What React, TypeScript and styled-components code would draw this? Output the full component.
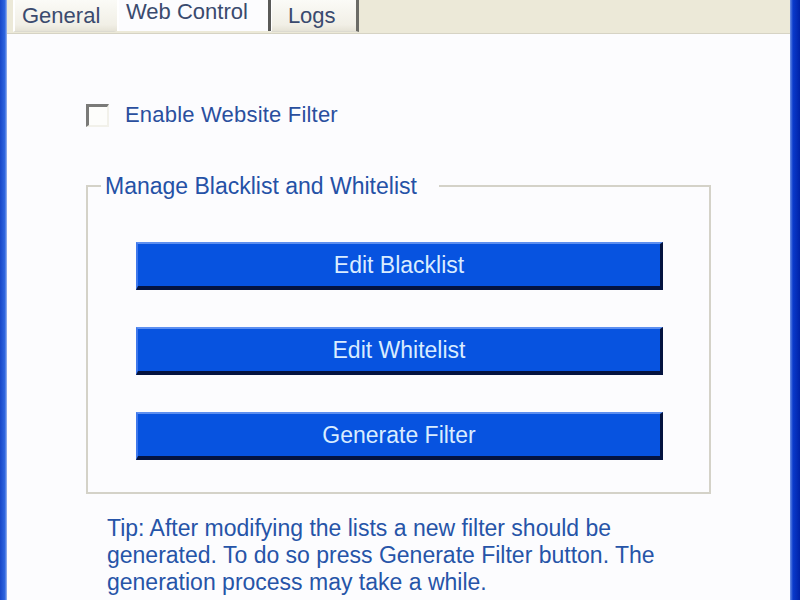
import styled, { createGlobalStyle } from "styled-components";

const TABS = [
  { title: "General", active: false },
  { title: "Web Control", active: true },
  { title: "Logs", active: false },
];

const LIST_BUTTONS = ["Edit Blacklist", "Edit Whitelist", "Generate Filter"];

const GlobalStyle = createGlobalStyle`
  html, body {
    margin: 0;
    padding: 0;
    background: #fcfcfe;
  }
  body {
    font-family: "Liberation Sans", Arial, sans-serif;
  }
`;

export default function App() {
  const tabs = TABS.map((tab, i) => (
    <Tab key={i} $active={tab.active}>
      {tab.title}
    </Tab>
  ));

  const buttons = LIST_BUTTONS.map((label, i) => (
    <ListButton key={i}>{label}</ListButton>
  ));

  return (
    <Window>
      <GlobalStyle />
      <FrameEdge $side="left" />
      <Body>
        <TabStrip>{tabs}</TabStrip>
        <Panel>
          <CheckRow>
            <CheckBox />
            <CheckLabel>Enable Website Filter</CheckLabel>
          </CheckRow>

          <GroupBox>
            <Legend>Manage Blacklist and Whitelist</Legend>
            <ButtonStack>{buttons}</ButtonStack>
          </GroupBox>

          <Tip>
            Tip: After modifying the lists a new filter should be
            <br />
            generated. To do so press Generate Filter button. The
            <br />
            generation process may take a while.
          </Tip>
        </Panel>
      </Body>
      <FrameEdge $side="right" />
    </Window>
  );
}

const Window = styled.div`
  display: flex;
  width: 800px;
  height: 600px;
  overflow: hidden;
  background: #fcfcfe;
`;

const FrameEdge = styled.div<{ $side: "left" | "right" }>`
  flex: none;
  width: ${(p) => (p.$side === "left" ? "7px" : "10px")};
  background: ${(p) =>
    p.$side === "left"
      ? "linear-gradient(to right, #1747c8, #2e66e0 70%, #9fb8ee)"
      : "linear-gradient(to right, #6b8fe6, #0a3acb 30%, #0022a8)"};
`;

const Body = styled.div`
  flex: 1;
  display: flex;
  flex-direction: column;
  min-width: 0;
`;

const TabStrip = styled.div`
  display: flex;
  align-items: flex-start;
  height: 34px;
  padding-left: 6px;
  background: #ece9d8;
  border-bottom: 1px solid #d6d3c4;
  box-sizing: border-box;
`;

const Tab = styled.div<{ $active: boolean }>`
  flex: none;
  box-sizing: border-box;
  height: ${(p) => (p.$active ? "35px" : "32px")};
  margin-top: ${(p) => (p.$active ? "-4px" : "0")};
  padding: ${(p) => (p.$active ? "4px 20px 0 7px" : "4px 20px 0 16px")};
  margin-right: ${(p) => (p.$active ? "-1px" : "0")};
  position: relative;
  z-index: ${(p) => (p.$active ? 1 : 0)};
  background: ${(p) =>
    p.$active ? "#fcfcfe" : "linear-gradient(#fbfbf7, #f1efe6 80%, #e6e3d6)"};
  border-left: 2px solid #ffffff;
  border-right: 3px solid ${(p) => (p.$active ? "#5a5a58" : "#6b6b66")};
  border-bottom: ${(p) => (p.$active ? "none" : "1px solid #dcdad0")};
  color: #3a4a6e;
  font-size: 22px;
  line-height: 24px;
  white-space: nowrap;

  &:first-child {
    border-right-color: transparent;
    width: 104px;
    padding-left: 7px;
  }
`;

const Panel = styled.div`
  flex: 1;
  display: flex;
  flex-direction: column;
  padding: 69px 0 0 79px;
  color: #2451a6;
`;

const CheckRow = styled.div`
  display: flex;
  align-items: center;
  gap: 16px;
  height: 24px;
`;

const CheckBox = styled.div`
  box-sizing: border-box;
  width: 23px;
  height: 23px;
  border-top: 3px solid #7a7a78;
  border-left: 3px solid #7a7a78;
  border-right: 2px solid #f2f1ea;
  border-bottom: 2px solid #f2f1ea;
  background: #fdfdfb;
`;

const CheckLabel = styled.span`
  font-size: 22px;
  letter-spacing: 0.2px;
  color: #2a4f9e;
`;

const GroupBox = styled.fieldset`
  box-sizing: border-box;
  width: 625px;
  height: 320px;
  margin: 47px 0 0 0;
  padding: 0;
  border: 2px solid #d4d2c8;
  border-radius: 0;
`;

const Legend = styled.legend`
  margin-left: 13px;
  padding: 0 22px 0 4px;
  font-size: 23px;
  line-height: 24px;
  color: #2451a6;
`;

const ButtonStack = styled.div`
  display: flex;
  flex-direction: column;
  gap: 37px;
  padding: 44px 0 0 48px;
`;

const ListButton = styled.div`
  box-sizing: border-box;
  width: 527px;
  height: 48px;
  display: flex;
  align-items: center;
  justify-content: center;
  padding-top: 1px;
  background: #0753e0;
  border-top: 2px solid #5d8ff0;
  border-left: 2px solid #3f78ec;
  border-right: 3px solid #04133f;
  border-bottom: 4px solid #04133f;
  color: #d9ecff;
  font-size: 23px;
`;

const Tip = styled.div`
  margin: 21px 0 0 21px;
  font-size: 23px;
  line-height: 27px;
  color: #2654a8;
`;
